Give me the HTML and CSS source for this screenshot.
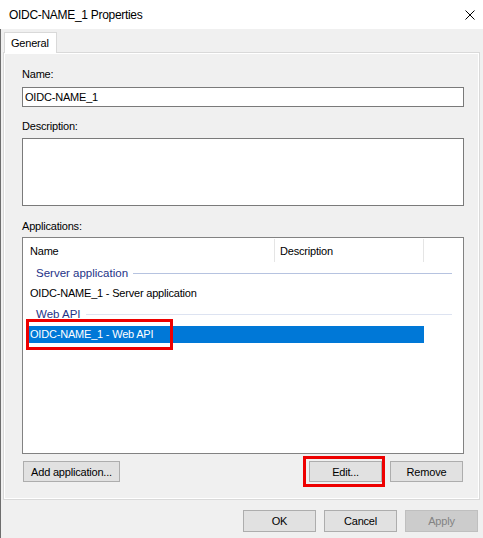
FILE: index.html
```html
<!DOCTYPE html>
<html>
<head>
<meta charset="utf-8">
<link rel="stylesheet" href="styles.css">
</head>
<body>
<div class="window">
  <div class="titlebar">
    <span class="title">OIDC-NAME_1 Properties</span>
    <svg class="close" width="10" height="10" viewBox="0 0 10 10"><path d="M0.5 0.5 L9.5 9.5 M9.5 0.5 L0.5 9.5" stroke="#000" stroke-width="1" fill="none"/></svg>
  </div>
  <div class="client">
    <div class="tabstrip"><div class="tab">General</div></div>
    <div class="panel">
      <label class="field-label">Name:</label>
      <div class="textbox">OIDC-NAME_1</div>
      <label class="field-label desc-label">Description:</label>
      <div class="textarea"></div>
      <label class="field-label apps-label">Applications:</label>
      <div class="listview">
        <div class="lv-header">
          <div class="col col-name">Name</div>
          <div class="col col-desc">Description</div>
        </div>
        <div class="group group-first"><span class="group-text">Server application</span><span class="group-line"></span></div>
        <div class="item">OIDC-NAME_1 - Server application</div>
        <div class="group group-second"><span class="group-text">Web API</span><span class="group-line light"></span></div>
        <div class="item selected">OIDC-NAME_1 - Web API</div>
        <div class="annot annot-item"></div>
      </div>
      <div class="panel-buttons">
        <button class="btn btn-add">Add application...</button>
        <div class="right-buttons">
          <div class="edit-wrap">
            <button class="btn">Edit...</button>
            <div class="annot annot-edit"></div>
          </div>
          <button class="btn btn-remove">Remove</button>
        </div>
      </div>
    </div>
    <div class="footer">
      <button class="btn btn-foot">OK</button>
      <button class="btn btn-foot">Cancel</button>
      <button class="btn btn-foot disabled">Apply</button>
    </div>
  </div>
</div>
</body>
</html>
```
FILE: styles.css
```css
* { box-sizing: border-box; }
html, body { margin: 0; padding: 0; }
body {
  width: 483px;
  height: 538px;
  overflow: hidden;
  background: #f0f0f0;
  font-family: "Liberation Sans", Arial, sans-serif;
  font-size: 11px;
  letter-spacing: -0.2px;
  color: #000;
}
.window { display: flex; flex-direction: column; height: 538px; }
.titlebar {
  height: 29px;
  background: #fff;
  display: flex;
  align-items: center;
  padding-left: 9px;
  flex: none;
}
.title { font-size: 12px; letter-spacing: -0.3px; color: #000; }
.close { margin-left: auto; margin-right: 8px; }
.client {
  flex: 1;
  background: #f0f0f0;
  border-left: 1px solid #6d6d6d;
  padding: 3px 3px 0 2px;
}
.tabstrip { height: 20px; position: relative; z-index: 1; }
.tab {
  margin-left: 1px;
  width: 53px;
  height: 21px;
  background: #fff;
  border: 1px solid #d9d9d9;
  border-bottom: none;
  padding-left: 6px;
  line-height: 20px;
}
.panel {
  border: 1px solid #d9d9d9;
  box-shadow: inset 0 0 0 1px #fff;
  padding: 14px 15px 17px 18px;
}
.field-label { display: block; line-height: 14px; }
.desc-label { margin-top: 12px; }
.apps-label { margin-top: 13px; }
.textbox {
  margin-top: 6px;
  height: 20px;
  border: 1px solid #7a7a7a;
  background: #fff;
  padding-left: 2px;
  line-height: 18px;
}
.textarea {
  margin-top: 5px;
  height: 68px;
  border: 1px solid #7a7a7a;
  background: #fff;
}
.listview {
  margin-top: 4px;
  height: 217px;
  border: 1px solid #828282;
  background: #fff;
  position: relative;
  overflow: hidden;
}
.lv-header { height: 24px; display: flex; }
.col {
  display: flex;
  align-items: center;
  border-right: 1px solid #e5e5e5;
  margin: 1px 0 0;
  padding-top: 1px;
}
.col-name { width: 252px; padding-left: 7px; }
.col-desc { width: 149px; padding-left: 5px; }
.group {
  display: flex;
  align-items: center;
  padding-left: 13px;
  color: #1e3287;
}
.group-first { height: 22px; }
.group-second { height: 24px; }
.group-text { font-size: 11.5px; letter-spacing: 0; }
.group-line {
  flex: 1;
  height: 1px;
  background: #b6c3e0;
  margin-left: 5px;
  margin-right: 11px;
}
.group-line.light { background: #dde3f1; }
.item { height: 18px; line-height: 18px; padding-left: 7px; }
.item.selected {
  height: 17px;
  line-height: 17px;
  margin-left: 6px;
  width: 395px;
  padding-left: 1px;
  background: #0078d7;
  color: #fff;
}
.annot { position: absolute; border: 3px solid #ee0000; }
.annot-item { left: 3px; top: 81px; width: 147px; height: 31px; }
.panel-buttons {
  margin-top: 7px;
  display: flex;
  justify-content: space-between;
}
.btn {
  font-family: "Liberation Sans", Arial, sans-serif;
  font-size: 11px;
  letter-spacing: -0.2px;
  color: #000;
  background: #e1e1e1;
  border: 1px solid #adadad;
  padding: 0;
  height: 21px;
  margin: 0;
}
.btn-add { width: 97px; margin-left: 1px; }
.right-buttons { display: flex; gap: 8px; margin-right: 1px; }
.edit-wrap { position: relative; }
.edit-wrap .btn, .btn-remove { width: 73px; }
.annot-edit { left: -6px; right: -3px; top: -5px; bottom: -5px; }
.footer {
  margin-top: 10px;
  display: flex;
  justify-content: flex-end;
  gap: 8px;
  padding-right: 2px;
}
.btn-foot { width: 73px; height: 22px; }
.btn-foot.disabled { background: #cccccc; border-color: #bfbfbf; color: #838383; }
```
